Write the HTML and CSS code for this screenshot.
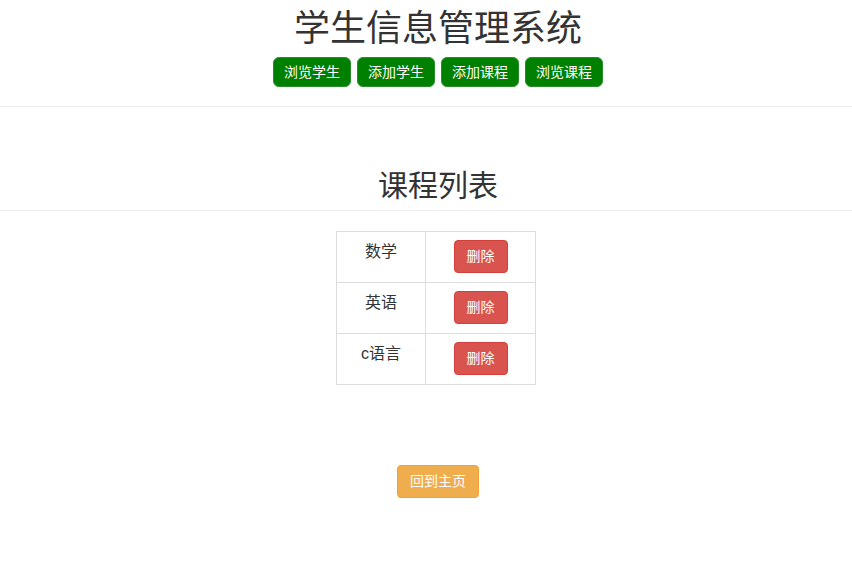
FILE: index.html
```html
<!DOCTYPE html>
<html lang="zh">
<head>
<meta charset="utf-8">
<title>学生信息管理系统</title>
<link rel="stylesheet" href="styles.css">
</head>
<body>
<header class="header">
  <h1 class="title">学生信息管理系统</h1>
  <nav class="nav">
    <a class="btn-green">浏览学生</a>
    <a class="btn-green">添加学生</a>
    <a class="btn-green">添加课程</a>
    <a class="btn-green">浏览课程</a>
  </nav>
</header>
<hr class="rule">
<h2 class="subtitle">课程列表</h2>
<hr class="rule rule-tight">
<div class="table-wrap">
  <table class="courses">
    <tr><td class="name">数学</td><td class="act"><a class="btn btn-danger">删除</a></td></tr>
    <tr><td class="name">英语</td><td class="act"><a class="btn btn-danger">删除</a></td></tr>
    <tr><td class="name">c语言</td><td class="act"><a class="btn btn-danger">删除</a></td></tr>
  </table>
</div>
<div class="back">
  <a class="btn btn-warning">回到主页</a>
</div>
</body>
</html>
```

FILE: styles.css
```css
html, body {
  margin: 0;
  padding: 0;
  background: #fff;
}
body {
  font-family: "Liberation Sans", "Noto Sans CJK SC", sans-serif;
  color: #333;
  font-size: 14px;
}
.header {
  padding: 9px 0 0 24px;
  display: flex;
  flex-direction: column;
  align-items: center;
}
.title {
  margin: 0;
  font-size: 36px;
  line-height: 40px;
  font-weight: 400;
  color: #333;
}
.nav {
  display: flex;
  gap: 6px;
  margin-top: 8px;
}
.btn-green {
  display: block;
  box-sizing: border-box;
  height: 30px;
  padding: 4px 10px;
  line-height: 20px;
  font-size: 14px;
  color: #fff;
  background: #008000;
  border: 1px solid #2a8f2a;
  border-radius: 6px;
  text-decoration: none;
}
.rule {
  border: 0;
  border-top: 1px solid #eee;
  margin: 19px 0 0;
}
.rule-tight {
  margin-top: 8px;
}
.subtitle {
  margin: 62px 0 0;
  padding-left: 24px;
  text-align: center;
  font-size: 30px;
  line-height: 33px;
  font-weight: 400;
  color: #333;
}
.table-wrap {
  display: flex;
  justify-content: center;
  padding-left: 20px;
  margin-top: 20px;
}
.courses {
  border-collapse: collapse;
  table-layout: fixed;
}
.courses td {
  border: 1px solid #ddd;
  padding: 8px 8px 9px;
  vertical-align: top;
  text-align: center;
}
.courses td.name {
  width: 72px;
  font-size: 16px;
  line-height: 22px;
  padding-top: 9px;
  padding-bottom: 8px;
}
.courses td.act {
  width: 93px;
  height: 33px;
}
.btn {
  display: inline-block;
  box-sizing: border-box;
  height: 33px;
  padding: 6px 12px;
  line-height: 19px;
  font-size: 14px;
  border: 1px solid transparent;
  border-radius: 4px;
  color: #fff;
  text-decoration: none;
  vertical-align: top;
}
.btn-danger {
  background: #d9534f;
  border-color: #d43f3a;
}
.btn-warning {
  background: #f0ad4e;
  border-color: #eea236;
}
.back {
  display: flex;
  justify-content: center;
  padding-left: 24px;
  margin-top: 80px;
}
```
